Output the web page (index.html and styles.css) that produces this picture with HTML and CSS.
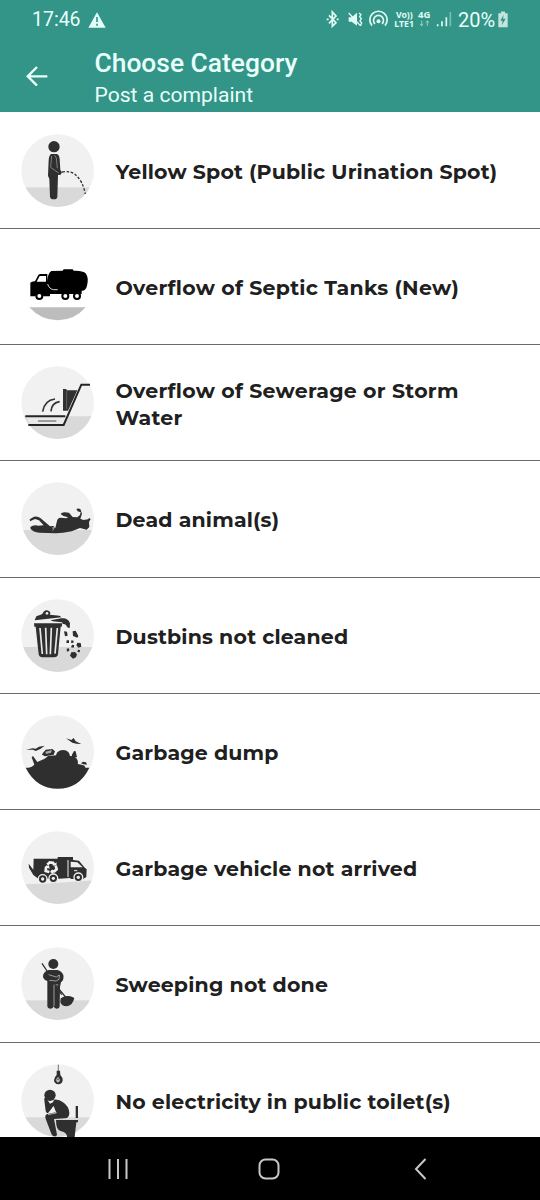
FILE: index.html
```html
<!DOCTYPE html>
<html lang="en">
<head>
<meta charset="utf-8">
<title>Choose Category</title>
<link rel="stylesheet" href="styles.css">
</head>
<body>
<svg class="defs" aria-hidden="true">
  <defs>
    <clipPath id="disc"><circle cx="128" cy="128" r="109"/></clipPath>
    <g id="base" clip-path="url(#disc)"><rect width="256" height="256" fill="#f1f1f1"/><rect y="178" width="256" height="78" fill="#d9d9d9"/></g>
    <g id="base-mid" clip-path="url(#disc)"><rect width="256" height="256" fill="#f1f1f1"/><rect y="162" width="256" height="94" fill="#d9d9d9"/></g>
  </defs>
</svg>
<div class="phone">
  <header class="top">
    <div class="status">
      <span class="clock">17:46</span>
      <svg class="warn" viewBox="0 0 54 48"><path fill="#e4fffb" d="M27 1 53 47H1Z"/><path stroke="#339587" stroke-width="5" d="M27 15v15m0 5v6"/></svg>
      <svg class="signals" viewBox="0 0 390 75" fill="none" stroke="#e0fbf6" stroke-width="5">
        <path d="M9 25 30 47 19 58V15L30 27 9 49M2 37h6m24 0h6"/>
        <path fill="#e0fbf6" stroke="none" d="M68 31h9l16-14v39L77 44h-9z"/>
        <path stroke-width="4" d="m68 18 35 38M99 18l6 5-4 6 5 6-4 7 5 6-4 9"/>
        <path d="M138 56a26 26 0 1 1 39 0M147 51a15 15 0 1 1 21 0"/><circle cx="157.500" cy="43" r="6" fill="#e0fbf6" stroke="none"/>
        <g fill="#e0fbf6" stroke="none" class="tiny"><text x="210" y="33" textLength="33" lengthAdjust="spacingAndGlyphs">Vo</text><text x="242" y="33" textLength="18" lengthAdjust="spacingAndGlyphs">))</text><text x="205" y="59" textLength="59" lengthAdjust="spacingAndGlyphs">LTE1</text><text x="276" y="33" textLength="37" lengthAdjust="spacingAndGlyphs">4G</text></g>
        <g opacity=".55" stroke-width="3"><path d="M287 41v15m-5-5 5 5 5-5M304 57V42m-5 5 5-5 5 5"/></g>
        <path d="M335 58v-6M348 58V43M361 58V31"/><path opacity=".4" d="M373 58V15"/>
      </svg>
      <span class="percent">20%</span>
      <svg class="battery" viewBox="0 0 36 50"><path fill="#c3e5df" d="M12 1h12v5h8v42H4V6h8z"/><path fill="#338f81" d="M20 11 10 29h7l-3 13 12-19h-8z"/></svg>
    </div>
    <div class="appbar">
      <svg class="back" viewBox="0 0 66 62" fill="none" stroke="#eafffb" stroke-width="7"><path d="M64 31H6M33 3 5 31l28 28"/></svg>
      <div><h1>Choose Category</h1><p>Post a complaint</p></div>
    </div>
  </header>
  <main class="list">
    <section class="row">
      <svg class="icon" viewBox="0 0 255 255"><use href="#base"/>
        <g fill="#2f2f2f"><circle cx="117" cy="56" r="17"/><path d="M108 78h18q7 3 8 15l2 33 5 7-4 7-8 1-2 66q-1 7-10 7-11 0-12-8l-2-53-4-10 2-46q1-15 7-19z"/></g>
        <path d="m110 84-3 34 24 17M119 82l5 8 3 31" fill="none" stroke="#8d8d8d" stroke-width="2.500"/>
        <path d="M141 132q29-5 43 11 19 16 27 55" fill="none" stroke="#2f2f2f" stroke-width="4" stroke-dasharray="8 5"/>
      </svg>
      <h2>Yellow Spot (Public Urination Spot)</h2>
    </section>
    <section class="row">
      <svg class="icon" viewBox="0 0 255 255"><path fill="#bdbdbd" d="M43 190H212Q178 229 128 229T43 190Z"/>
        <path d="M46 118q0-5 14-6l10-19q2-3 7-3h20v23q1-25 12-32l34-1 3-4h27l3 4q28-1 36 8 10 14 4 37-4 16-16 15v10h-95v7H85q-3-11-12-11t-12 11H46z"/>
        <path fill="#fff" d="m65 113 9-17h19v17z"/><path d="M98 120q4 15 18 17h12" fill="none" stroke="#fff" stroke-width="2.500"/>
        <g fill="#fff" stroke="#000" stroke-width="6"><circle cx="73" cy="156" r="9"/><circle cx="151" cy="156" r="9"/><circle cx="186" cy="156" r="9"/></g>
      </svg>
      <h2 class="wide">Overflow of Septic Tanks (New)</h2>
    </section>
    <section class="row">
      <svg class="icon" viewBox="0 0 255 255"><g clip-path="url(#disc)"><rect width="255" height="255" fill="#f1f1f1"/><path fill="#d9d9d9" d="M15 169h225v70H15z"/></g>
        <path fill="#e9e9e9" d="M33 169h124l-15 27H45z"/><path fill="#303030" d="M144 87h9l3 4h31l-28 61h-15z"/><path stroke="#777" stroke-width="2" d="M155 92v55"/>
        <path d="M31 169h120M40 195h106l53-121h26" fill="none" stroke="#242424" stroke-width="6"/>
        <path d="M69 183h55" stroke="#777" stroke-width="4"/><path d="M83 155q5-34 37-38M108 154q2-26 26-29" fill="none" stroke="#333" stroke-width="5"/>
      </svg>
      <h2 class="wide">Overflow of Sewerage or Storm<br>Water</h2>
    </section>
    <section class="row">
      <svg class="icon" viewBox="0 0 255 255"><use href="#base-mid"/>
        <path fill="#2f2f2f" d="M46 153q9-7 24-4l16-1-14-15-12-4-15 7-1-6 13-8q12-2 20 5l28 24 10-1 6 6 5-21q1-9 11-10l17 2 5-3-14-4-8-6q2-5 12-5l13 1 11 13 14 1 8-7 2-8-9-3-4-7q5-3 12 0l5 14-5 15 9 4 14-2 4-4 4 3-5 9 1 15-8 8-20-5-25 10-26 4-21 2-50-2q-19-2-26-11z"/>
        <path stroke="#eee" stroke-width="2" d="m111 157 7-3-5 10"/>
      </svg>
      <h2>Dead animal(s)</h2>
    </section>
    <section class="row">
      <svg class="icon" viewBox="0 0 255 255"><use href="#base-mid"/>
        <g fill="#2f2f2f"><path d="m59 82 5-12 17-6 5-8q10-9 20 2l-1 7 28 3 7 5zM57 91h85l-2 10h-3l-8 83q-1 9-12 9H82q-9 0-11-9l-9-83h-4z"/><path d="m107 82 32-6q20-2 26 15l-1 15-7-3q-5-12-13-10l-3-5-28-3zM147 115l9 1 2 12-8 2zM173 115l9-2 8 16-3 5-13-5zM155 142h7v8h-8zM169 142l7 1-1 7-7-1zM187 149l10 1 2 11-9 3-6-7zM171 155l7 2-2 7-8-1zM155 167l7-1 1 7-7 3zM189 170l6 1-1 7-7-1zM169 178l11-1 6 7-3 9-9 4-9-9z"/></g>
        <circle cx="96" cy="61" r="4" fill="#eee"/><path d="m75 105 7 78M92 104l3 80M109 104l-3 80M127 105l-7 77" stroke="#e8e8e8" stroke-width="5"/>
      </svg>
      <h2>Dustbins not cleaned</h2>
    </section>
    <section class="row">
      <svg class="icon" viewBox="0 0 255 255"><circle cx="128" cy="128" r="109" fill="#f1f1f1"/>
        <path fill="#2f2f2f" d="M32 176h9q10-2 17-9l-8-22 4-4 13 18 22-10 10-8 24-2q1-9 9-13 13-7 25 1 8 5 8 14 12-1 19 7 7 8 4 17l12 2q11 2 11 9h12q-30 63-95 63-64 0-96-63zM83 133l9-11 20-2 8 7-4 10-26 5-9-5zM170 139l7-13 5 1 4 18-12-1zM198 163l6-5 9 2 3 7-11-1zM33 122l20-4 9 1 10-6 17-3-13 10-14 6-8-4zM153 88l16 5 7-6 6 10 17 8-15-1-12-3z"/>
        <path d="m91 128 20-5-3 8-15 4z" fill="#aaa"/>
      </svg>
      <h2>Garbage dump</h2>
    </section>
    <section class="row">
      <svg class="icon" viewBox="0 0 255 255"><g clip-path="url(#disc)"><rect width="255" height="255" fill="#f1f1f1"/><path fill="#d9d9d9" d="M15 181q34-7 62-4l170-12v90H15z"/></g>
        <path fill="#2f2f2f" d="M56 101h72v-5h46v9l18 2 16 20 7 6-1 23-10 6h-35l-5-3-31 2H70l-15-11-13-22-1-12 14 18z"/>
        <path stroke="#efefef" stroke-width="3" d="M159 105v51M177 137h10" fill="none"/><path fill="#eee" d="m167 110 20 2 16 15h-36z"/>
        <g fill="#2f2f2f" stroke="#eee" stroke-width="4"><circle cx="83" cy="162" r="13"/><circle cx="115" cy="160" r="13"/><circle cx="190" cy="157" r="13"/></g><g fill="#eee"><circle cx="83" cy="162" r="5"/><circle cx="115" cy="160" r="5"/><circle cx="190" cy="157" r="5"/></g>
        <g fill="none" stroke="#f1f1f1" stroke-width="8"><path d="m97 119 7-7 10 1 4 6"/><path d="m122 122 3 11-7 6h-9"/><path d="m103 141-11-3 1-10 5-4"/></g><path fill="#f1f1f1" d="m112 121 12 1 1-10zm0 12-7 8 10 6zm-21-9 11-3 2 11z"/>
      </svg>
      <h2>Garbage vehicle not arrived</h2>
    </section>
    <section class="row">
      <svg class="icon" viewBox="0 0 255 255"><use href="#base"/>
        <path d="m81 67 19 29m18 31 36 44" stroke="#333" stroke-width="4"/><g fill="#2f2f2f"><circle cx="115" cy="69" r="15"/><path d="M101 87h25q13 1 19 15 3 15-7 22l-3 13-1 58q-1 8-9 8-7 0-9-7-2 7-9 7-9 0-10-8v-75q-13-4-13-14 0-14 17-19zM137 172q13-9 25-7 9 1 16 6-5 23-23 25-15 0-19-13z"/></g>
        <path d="m101 101 23 7 9-6-1 13-9 5-20-2m14 13v64m1-64 12 1" fill="none" stroke="#d0d0d0" stroke-width="2"/><path d="m117 126 23 35" stroke="#333" stroke-width="4"/>
      </svg>
      <h2>Sweeping not done</h2>
    </section>
    <section class="row">
      <svg class="icon" viewBox="0 0 255 255"><use href="#base"/>
        <path stroke="#333" stroke-width="2" d="M130 20v20"/><path fill="#2f2f2f" d="M125 38h10l1 13q8 8 7 16-1 11-13 12-12-1-13-12 0-9 8-16z"/><path d="m122 66 7-10 7 10-4 7h-6z" fill="#bbb"/><path d="m125 67 4-5 4 5" fill="none" stroke="#333" stroke-width="2"/>
        <circle cx="105" cy="112" r="17" fill="#2f2f2f"/><path fill="#2f2f2f" d="M88 126q-2-6 4-8l13 19 9-4 3-8q15-2 27 8 18 12 19 32 0 16-14 16l-32 2 9 47q-2 7-9 5-6-1-8-8l-16-42q-6-14 4-17l26-5-7-19-16 20q-6 3-8-5zM123 186h66v7h-5l-5 44h-23q1-11-12-16-17-2-20-21zM182 144h7v36h-7z"/><path d="m112 147 12 18-25 5" fill="none" stroke="#e8e8e8" stroke-width="2"/>
      </svg>
      <h2>No electricity in public toilet(s)</h2>
    </section>
  </main>
  <nav class="nav">
    <svg viewBox="0 0 540 63" fill="none" stroke="#c8c8c8" stroke-width="2"><path d="M109.500 22v20M118 22v20M126.500 22v20"/><rect x="259.500" y="22.500" width="19" height="19" rx="6"/><path d="m425.500 22-9.500 10 9.500 10"/></svg>
  </nav>
</div>
</body>
</html>
```
FILE: styles.css
```css
* { box-sizing: border-box; }
body { margin: 0; background: #fff; }
h1, h2, p { margin: 0; }
svg { display: block; flex: none; }
.defs { position: absolute; width: 0; height: 0; }
.phone { display: flex; flex-direction: column; width: 540px; height: 1200px; overflow: hidden; }
.top { flex: none; height: 112px; background: #339587; color: #e8fffb; font-family: Roboto, sans-serif; }
.status { display: flex; height: 40px; padding-left: 32px; font-size: 19.5px; line-height: 40px; }
.clock { width: 56px; }
.warn { width: 18px; height: 16px; margin-top: 12px; }
.signals { width: 130px; height: 25px; margin: 7px 0 0 220px; }
.tiny { font: bold 25px "Noto Sans", sans-serif; }
.percent { width: 38px; margin-left: 2px; font-size: 20px; }
.battery { width: 12px; height: 17px; margin: 11px 0 0 1px; }
.appbar { display: flex; height: 72px; padding: 7px 0 0 26px; }
.back { width: 22px; height: 20.670px; margin: 18.500px 46.500px 0 0; }
.appbar h1 { font-size: 26.400px; font-weight: 500; line-height: 32px; white-space: nowrap; }
.appbar p { font-size: 21.100px; line-height: 32px; }
.list { flex: 1; min-height: 0; overflow: hidden; padding-top: 0.600px; }
.row { display: flex; align-items: center; gap: 15.500px; height: 116.250px; padding-left: 15px; border-bottom: 1px solid #6b6b6b; }
.icon { width: 85px; height: 85px; }
.row h2 { color: #202020; font: 700 20.500px/27px Montserrat, Inter, sans-serif; letter-spacing: 0.180px; white-space: nowrap; padding-top: 2px; }
.row .wide { letter-spacing: 0.270px; }
.nav { flex: none; height: 63px; background: #000; }
.nav svg { width: 540px; height: 63px; }
```
